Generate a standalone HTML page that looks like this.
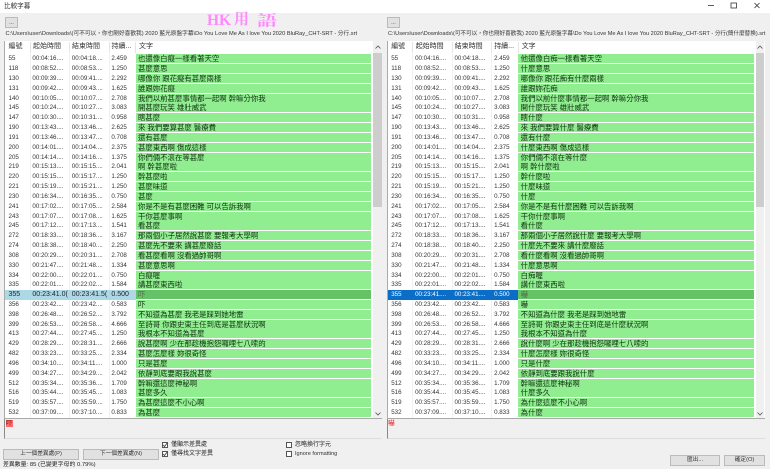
<!DOCTYPE html>
<html lang="zh-Hant"><head><meta charset="utf-8"><title>比較字幕</title>
<style>
html,body{margin:0;padding:0;width:770px;height:469px;overflow:hidden;background:#f0f0f0}
body{position:relative;font-family:"Liberation Sans","Noto Sans CJK TC",sans-serif;color:#222;filter:blur(.3px)}
.a{position:absolute;white-space:nowrap}
.tb{position:absolute;left:0;top:0;width:770px;height:13px;background:#fff}
.btn{position:absolute;background:#e1e1e1;border:1px solid #bbb;box-sizing:border-box;text-align:center;font-size:5.7px;color:#333;line-height:9px}
.p{position:absolute;top:41px;width:377.5px;height:378px;background:#fff;border-left:1px solid #aaa;border-bottom:1px solid #aaa;box-sizing:border-box;overflow:hidden}
.h{position:relative;height:13.3px;font-size:7px;line-height:12px;color:#333;background:#fff}
.h span{position:absolute;top:0}
.h i{position:absolute;top:1px;width:1px;height:11px;background:#e5e5e5}
.r{position:relative;height:9.83px;font-size:6.2px;line-height:9.4px;color:#333}
.r span{position:absolute;top:0}
.r .c1{left:3.5px}.r .c2{left:27.4px}.r .c3{left:66.8px}.r .c4{left:106.4px}
.r .c5{left:130.7px;width:235.6px;height:9px;background:#90ee90;color:#123012;font-size:7.4px;line-height:9.4px;padding-left:2.3px;box-sizing:border-box}
.r i{position:absolute;top:0;width:1px;height:9.83px;background:#f1f1f1}
.r i.x1{left:24.5px}.r i.x2{left:64px}.r i.x3{left:103.5px}
.s1{color:#223;font-size:7px}
.s1 .bg,.s2 .bg{position:absolute;left:0;top:0;width:130.7px;height:9.4px}
.s1 .bg{background:#add8e6}.s2 .bg{background:#0a6ec8}
.s2 .c1,.s2 .c2,.s2 .c3,.s2 .c4{color:#fff}
.sel .c5{background:#66c266;color:#4a6e4a}
.sb{position:absolute;top:41px;width:8.5px;height:377px;background:#f0f0f0}
.sb .t{position:absolute;left:0;top:12px;width:8.5px;height:154px;background:#cdcdcd}
.sb svg{position:absolute;left:1.5px;width:6px;height:4px}
.box{position:absolute;top:419px;height:19.5px;border-left:1px solid #8a8a8a;border-bottom:1px solid #ddd;box-sizing:border-box}
.cb{position:absolute;width:6px;height:6px;border:1px solid #555;background:#fff;box-sizing:border-box}
.cb svg{position:absolute;left:-1px;top:-1px;width:6px;height:6px}
.l{position:absolute;font-size:6px;line-height:8px;color:#222;white-space:nowrap}
.hk{position:absolute;font-family:'Liberation Serif','Noto Serif CJK SC',serif;font-weight:bold;color:#ff88ff;white-space:nowrap}
</style></head><body>
<div class="tb"></div>
<div class="a" style="left:4px;top:2px;font-size:6.6px;line-height:9px;color:#333">比較字幕</div>
<svg class="a" style="left:700px;top:0;width:70px;height:13px" viewBox="0 0 70 13"><path d="M8 5.5h6" stroke="#333" stroke-width=".8" fill="none"/><rect x="31" y="3" width="5.5" height="5" stroke="#333" stroke-width=".8" fill="none"/><path d="M54.5 3l5 5M59.5 3l-5 5" stroke="#333" stroke-width=".8" fill="none"/></svg>
<div class="hk" style="left:207px;top:10px;font-size:15.5px;line-height:22px">HK</div>
<div class="hk" style="left:234px;top:13px;font-size:15px;line-height:15px">用</div>
<div class="hk" style="left:257px;top:15px;font-size:20px;line-height:17px;transform:scaleY(.75);transform-origin:left top">語</div>
<div class="btn" style="left:5px;top:17px;width:13px;height:11px;line-height:10px">...</div>
<div class="btn" style="left:387px;top:17px;width:13px;height:11px;line-height:10px">...</div>
<div class="a" style="left:5.5px;top:30px;font-size:5.7px;line-height:9px;color:#333">C:\Users\user\Downloads\(可不可以，你也剛好喜歡我) 2020 藍光原盤字幕\Do You Love Me As I love You 2020 BluRay_CHT-SRT - 分行.srt</div>
<div class="a" style="left:388px;top:30px;font-size:5.6px;line-height:9px;color:#333">C:\Users\user\Downloads\(可不可以，你也剛好喜歡我) 2020 藍光原盤字幕\Do You Love Me As I love You 2020 BluRay_CHT-SRT - 分行(簡什麼替換).srt</div>

<div class="p" style="left:4px">
<div class="h"><span style="left:3.5px">編號</span><span style="left:28px">起始時間</span><span style="left:67px">結束時間</span><span style="left:106.5px">持續...</span><span style="left:134px">文字</span><i style="left:24.5px"></i><i style="left:64px"></i><i style="left:103.5px"></i><i style="left:130px"></i></div>
<div class="r"><i class="x1"></i><i class="x2"></i><i class="x3"></i><span class="c1">55</span><span class="c2">00:04:16....</span><span class="c3">00:04:18....</span><span class="c4">2.459</span><span class="c5">也還像白癡一樣看著天空</span></div>
<div class="r"><i class="x1"></i><i class="x2"></i><i class="x3"></i><span class="c1">118</span><span class="c2">00:08:52....</span><span class="c3">00:08:53....</span><span class="c4">1.250</span><span class="c5">甚麼意思</span></div>
<div class="r"><i class="x1"></i><i class="x2"></i><i class="x3"></i><span class="c1">130</span><span class="c2">00:09:39....</span><span class="c3">00:09:41....</span><span class="c4">2.292</span><span class="c5">哪像你 跟花癡有甚麼兩樣</span></div>
<div class="r"><i class="x1"></i><i class="x2"></i><i class="x3"></i><span class="c1">131</span><span class="c2">00:09:42....</span><span class="c3">00:09:43....</span><span class="c4">1.625</span><span class="c5">誰跟妳花癡</span></div>
<div class="r"><i class="x1"></i><i class="x2"></i><i class="x3"></i><span class="c1">140</span><span class="c2">00:10:05....</span><span class="c3">00:10:07....</span><span class="c4">2.708</span><span class="c5">我們以前甚麼事情都一起啊 幹嘛分你我</span></div>
<div class="r"><i class="x1"></i><i class="x2"></i><i class="x3"></i><span class="c1">145</span><span class="c2">00:10:24....</span><span class="c3">00:10:27....</span><span class="c4">3.083</span><span class="c5">開甚麼玩笑 雄壯威武</span></div>
<div class="r"><i class="x1"></i><i class="x2"></i><i class="x3"></i><span class="c1">147</span><span class="c2">00:10:30....</span><span class="c3">00:10:31....</span><span class="c4">0.958</span><span class="c5">瞎甚麼</span></div>
<div class="r"><i class="x1"></i><i class="x2"></i><i class="x3"></i><span class="c1">190</span><span class="c2">00:13:43....</span><span class="c3">00:13:46....</span><span class="c4">2.625</span><span class="c5">來 我們要算甚麼 醫療費</span></div>
<div class="r"><i class="x1"></i><i class="x2"></i><i class="x3"></i><span class="c1">191</span><span class="c2">00:13:46....</span><span class="c3">00:13:47....</span><span class="c4">0.708</span><span class="c5">還有甚麼</span></div>
<div class="r"><i class="x1"></i><i class="x2"></i><i class="x3"></i><span class="c1">200</span><span class="c2">00:14:01....</span><span class="c3">00:14:04....</span><span class="c4">2.375</span><span class="c5">甚麼東西啊 傷成這樣</span></div>
<div class="r"><i class="x1"></i><i class="x2"></i><i class="x3"></i><span class="c1">205</span><span class="c2">00:14:14....</span><span class="c3">00:14:16....</span><span class="c4">1.375</span><span class="c5">你們倆不滾在等甚麼</span></div>
<div class="r"><i class="x1"></i><i class="x2"></i><i class="x3"></i><span class="c1">219</span><span class="c2">00:15:13....</span><span class="c3">00:15:15....</span><span class="c4">2.041</span><span class="c5">啊 幹甚麼啦</span></div>
<div class="r"><i class="x1"></i><i class="x2"></i><i class="x3"></i><span class="c1">220</span><span class="c2">00:15:15....</span><span class="c3">00:15:17....</span><span class="c4">1.250</span><span class="c5">幹甚麼啦</span></div>
<div class="r"><i class="x1"></i><i class="x2"></i><i class="x3"></i><span class="c1">221</span><span class="c2">00:15:19....</span><span class="c3">00:15:21....</span><span class="c4">1.250</span><span class="c5">甚麼味道</span></div>
<div class="r"><i class="x1"></i><i class="x2"></i><i class="x3"></i><span class="c1">230</span><span class="c2">00:16:34....</span><span class="c3">00:16:35....</span><span class="c4">0.750</span><span class="c5">甚麼</span></div>
<div class="r"><i class="x1"></i><i class="x2"></i><i class="x3"></i><span class="c1">241</span><span class="c2">00:17:02....</span><span class="c3">00:17:05....</span><span class="c4">2.584</span><span class="c5">你是不是有甚麼困難 可以告訴我啊</span></div>
<div class="r"><i class="x1"></i><i class="x2"></i><i class="x3"></i><span class="c1">243</span><span class="c2">00:17:07....</span><span class="c3">00:17:08....</span><span class="c4">1.625</span><span class="c5">干你甚麼事啊</span></div>
<div class="r"><i class="x1"></i><i class="x2"></i><i class="x3"></i><span class="c1">245</span><span class="c2">00:17:12....</span><span class="c3">00:17:13....</span><span class="c4">1.541</span><span class="c5">看甚麼</span></div>
<div class="r"><i class="x1"></i><i class="x2"></i><i class="x3"></i><span class="c1">272</span><span class="c2">00:18:33....</span><span class="c3">00:18:36....</span><span class="c4">3.167</span><span class="c5">那兩個小子居然說甚麼 要報考大學啊</span></div>
<div class="r"><i class="x1"></i><i class="x2"></i><i class="x3"></i><span class="c1">274</span><span class="c2">00:18:38....</span><span class="c3">00:18:40....</span><span class="c4">2.250</span><span class="c5">甚麼先不要來 講甚麼廢話</span></div>
<div class="r"><i class="x1"></i><i class="x2"></i><i class="x3"></i><span class="c1">308</span><span class="c2">00:20:29....</span><span class="c3">00:20:31....</span><span class="c4">2.708</span><span class="c5">看甚麼看啊 沒看過帥哥啊</span></div>
<div class="r"><i class="x1"></i><i class="x2"></i><i class="x3"></i><span class="c1">330</span><span class="c2">00:21:47....</span><span class="c3">00:21:48....</span><span class="c4">1.334</span><span class="c5">甚麼意思啊</span></div>
<div class="r"><i class="x1"></i><i class="x2"></i><i class="x3"></i><span class="c1">334</span><span class="c2">00:22:00....</span><span class="c3">00:22:01....</span><span class="c4">0.750</span><span class="c5">白癡喔</span></div>
<div class="r"><i class="x1"></i><i class="x2"></i><i class="x3"></i><span class="c1">335</span><span class="c2">00:22:01....</span><span class="c3">00:22:02....</span><span class="c4">1.584</span><span class="c5">講甚麼東西啦</span></div>
<div class="r sel s1"><b class="bg"></b><span class="c1">355</span><span class="c2">00:23:41.0(</span><span class="c3">00:23:41.5(</span><span class="c4">0.500</span><span class="c5">吓</span></div>
<div class="r"><i class="x1"></i><i class="x2"></i><i class="x3"></i><span class="c1">356</span><span class="c2">00:23:42....</span><span class="c3">00:23:42....</span><span class="c4">0.583</span><span class="c5">吓</span></div>
<div class="r"><i class="x1"></i><i class="x2"></i><i class="x3"></i><span class="c1">398</span><span class="c2">00:26:48....</span><span class="c3">00:26:52....</span><span class="c4">3.792</span><span class="c5">不知道為甚麼 我老是踩到她地雷</span></div>
<div class="r"><i class="x1"></i><i class="x2"></i><i class="x3"></i><span class="c1">399</span><span class="c2">00:26:53....</span><span class="c3">00:26:58....</span><span class="c4">4.666</span><span class="c5">至詩哥 你跟史東主任到底是甚麼狀況啊</span></div>
<div class="r"><i class="x1"></i><i class="x2"></i><i class="x3"></i><span class="c1">413</span><span class="c2">00:27:44....</span><span class="c3">00:27:45....</span><span class="c4">1.250</span><span class="c5">我根本不知道為甚麼</span></div>
<div class="r"><i class="x1"></i><i class="x2"></i><i class="x3"></i><span class="c1">429</span><span class="c2">00:28:29....</span><span class="c3">00:28:31....</span><span class="c4">2.666</span><span class="c5">說甚麼啊 少在那趁機抱怨囉哩七八嗦的</span></div>
<div class="r"><i class="x1"></i><i class="x2"></i><i class="x3"></i><span class="c1">482</span><span class="c2">00:33:23....</span><span class="c3">00:33:25....</span><span class="c4">2.334</span><span class="c5">甚麼怎麼樣 妳很奇怪</span></div>
<div class="r"><i class="x1"></i><i class="x2"></i><i class="x3"></i><span class="c1">496</span><span class="c2">00:34:10....</span><span class="c3">00:34:11....</span><span class="c4">1.000</span><span class="c5">只是甚麼</span></div>
<div class="r"><i class="x1"></i><i class="x2"></i><i class="x3"></i><span class="c1">499</span><span class="c2">00:34:27....</span><span class="c3">00:34:29....</span><span class="c4">2.042</span><span class="c5">依靜到底要跟我說甚麼</span></div>
<div class="r"><i class="x1"></i><i class="x2"></i><i class="x3"></i><span class="c1">512</span><span class="c2">00:35:34....</span><span class="c3">00:35:36....</span><span class="c4">1.709</span><span class="c5">幹嘛還這麼神秘啊</span></div>
<div class="r"><i class="x1"></i><i class="x2"></i><i class="x3"></i><span class="c1">516</span><span class="c2">00:35:44....</span><span class="c3">00:35:45....</span><span class="c4">1.083</span><span class="c5">甚麼多久</span></div>
<div class="r"><i class="x1"></i><i class="x2"></i><i class="x3"></i><span class="c1">519</span><span class="c2">00:35:57....</span><span class="c3">00:35:59....</span><span class="c4">1.750</span><span class="c5">為甚麼這麼不小心啊</span></div>
<div class="r"><i class="x1"></i><i class="x2"></i><i class="x3"></i><span class="c1">532</span><span class="c2">00:37:09....</span><span class="c3">00:37:10....</span><span class="c4">0.833</span><span class="c5">為甚麼</span></div>
</div>
<div class="sb" style="left:373px"><div class="t"></div><svg style="top:4px" viewBox="0 0 6 4"><path d="M.5 3.5L3 1l2.5 2.5" stroke="#555" stroke-width=".8" fill="none"/></svg><svg style="top:371px" viewBox="0 0 6 4"><path d="M.5 .5L3 3l2.5-2.5" stroke="#555" stroke-width=".8" fill="none"/></svg></div>

<div class="p" style="left:386.7px;width:378px">
<div class="h"><span style="left:3.5px">編號</span><span style="left:28px">起始時間</span><span style="left:67px">結束時間</span><span style="left:106.5px">持續...</span><span style="left:134px">文字</span><i style="left:24.5px"></i><i style="left:64px"></i><i style="left:103.5px"></i><i style="left:130px"></i></div>
<div class="r"><i class="x1"></i><i class="x2"></i><i class="x3"></i><span class="c1">55</span><span class="c2">00:04:16....</span><span class="c3">00:04:18....</span><span class="c4">2.459</span><span class="c5">他還像白痴一樣看著天空</span></div>
<div class="r"><i class="x1"></i><i class="x2"></i><i class="x3"></i><span class="c1">118</span><span class="c2">00:08:52....</span><span class="c3">00:08:53....</span><span class="c4">1.250</span><span class="c5">什麼意思</span></div>
<div class="r"><i class="x1"></i><i class="x2"></i><i class="x3"></i><span class="c1">130</span><span class="c2">00:09:39....</span><span class="c3">00:09:41....</span><span class="c4">2.292</span><span class="c5">哪像你 跟花痴有什麼兩樣</span></div>
<div class="r"><i class="x1"></i><i class="x2"></i><i class="x3"></i><span class="c1">131</span><span class="c2">00:09:42....</span><span class="c3">00:09:43....</span><span class="c4">1.625</span><span class="c5">誰跟妳花痴</span></div>
<div class="r"><i class="x1"></i><i class="x2"></i><i class="x3"></i><span class="c1">140</span><span class="c2">00:10:05....</span><span class="c3">00:10:07....</span><span class="c4">2.708</span><span class="c5">我們以前什麼事情都一起啊 幹嘛分你我</span></div>
<div class="r"><i class="x1"></i><i class="x2"></i><i class="x3"></i><span class="c1">145</span><span class="c2">00:10:24....</span><span class="c3">00:10:27....</span><span class="c4">3.083</span><span class="c5">開什麼玩笑 雄壯威武</span></div>
<div class="r"><i class="x1"></i><i class="x2"></i><i class="x3"></i><span class="c1">147</span><span class="c2">00:10:30....</span><span class="c3">00:10:31....</span><span class="c4">0.958</span><span class="c5">瞎什麼</span></div>
<div class="r"><i class="x1"></i><i class="x2"></i><i class="x3"></i><span class="c1">190</span><span class="c2">00:13:43....</span><span class="c3">00:13:46....</span><span class="c4">2.625</span><span class="c5">來 我們要算什麼 醫療費</span></div>
<div class="r"><i class="x1"></i><i class="x2"></i><i class="x3"></i><span class="c1">191</span><span class="c2">00:13:46....</span><span class="c3">00:13:47....</span><span class="c4">0.708</span><span class="c5">還有什麼</span></div>
<div class="r"><i class="x1"></i><i class="x2"></i><i class="x3"></i><span class="c1">200</span><span class="c2">00:14:01....</span><span class="c3">00:14:04....</span><span class="c4">2.375</span><span class="c5">什麼東西啊 傷成這樣</span></div>
<div class="r"><i class="x1"></i><i class="x2"></i><i class="x3"></i><span class="c1">205</span><span class="c2">00:14:14....</span><span class="c3">00:14:16....</span><span class="c4">1.375</span><span class="c5">你們倆不滾在等什麼</span></div>
<div class="r"><i class="x1"></i><i class="x2"></i><i class="x3"></i><span class="c1">219</span><span class="c2">00:15:13....</span><span class="c3">00:15:15....</span><span class="c4">2.041</span><span class="c5">啊 幹什麼啦</span></div>
<div class="r"><i class="x1"></i><i class="x2"></i><i class="x3"></i><span class="c1">220</span><span class="c2">00:15:15....</span><span class="c3">00:15:17....</span><span class="c4">1.250</span><span class="c5">幹什麼啦</span></div>
<div class="r"><i class="x1"></i><i class="x2"></i><i class="x3"></i><span class="c1">221</span><span class="c2">00:15:19....</span><span class="c3">00:15:21....</span><span class="c4">1.250</span><span class="c5">什麼味道</span></div>
<div class="r"><i class="x1"></i><i class="x2"></i><i class="x3"></i><span class="c1">230</span><span class="c2">00:16:34....</span><span class="c3">00:16:35....</span><span class="c4">0.750</span><span class="c5">什麼</span></div>
<div class="r"><i class="x1"></i><i class="x2"></i><i class="x3"></i><span class="c1">241</span><span class="c2">00:17:02....</span><span class="c3">00:17:05....</span><span class="c4">2.584</span><span class="c5">你是不是有什麼困難 可以告訴我啊</span></div>
<div class="r"><i class="x1"></i><i class="x2"></i><i class="x3"></i><span class="c1">243</span><span class="c2">00:17:07....</span><span class="c3">00:17:08....</span><span class="c4">1.625</span><span class="c5">干你什麼事啊</span></div>
<div class="r"><i class="x1"></i><i class="x2"></i><i class="x3"></i><span class="c1">245</span><span class="c2">00:17:12....</span><span class="c3">00:17:13....</span><span class="c4">1.541</span><span class="c5">看什麼</span></div>
<div class="r"><i class="x1"></i><i class="x2"></i><i class="x3"></i><span class="c1">272</span><span class="c2">00:18:33....</span><span class="c3">00:18:36....</span><span class="c4">3.167</span><span class="c5">那兩個小子居然說什麼 要報考大學啊</span></div>
<div class="r"><i class="x1"></i><i class="x2"></i><i class="x3"></i><span class="c1">274</span><span class="c2">00:18:38....</span><span class="c3">00:18:40....</span><span class="c4">2.250</span><span class="c5">什麼先不要來 講什麼廢話</span></div>
<div class="r"><i class="x1"></i><i class="x2"></i><i class="x3"></i><span class="c1">308</span><span class="c2">00:20:29....</span><span class="c3">00:20:31....</span><span class="c4">2.708</span><span class="c5">看什麼看啊 沒看過帥哥啊</span></div>
<div class="r"><i class="x1"></i><i class="x2"></i><i class="x3"></i><span class="c1">330</span><span class="c2">00:21:47....</span><span class="c3">00:21:48....</span><span class="c4">1.334</span><span class="c5">什麼意思啊</span></div>
<div class="r"><i class="x1"></i><i class="x2"></i><i class="x3"></i><span class="c1">334</span><span class="c2">00:22:00....</span><span class="c3">00:22:01....</span><span class="c4">0.750</span><span class="c5">白痴喔</span></div>
<div class="r"><i class="x1"></i><i class="x2"></i><i class="x3"></i><span class="c1">335</span><span class="c2">00:22:01....</span><span class="c3">00:22:02....</span><span class="c4">1.584</span><span class="c5">講什麼東西啦</span></div>
<div class="r sel s2"><b class="bg"></b><span class="c1">355</span><span class="c2">00:23:41....</span><span class="c3">00:23:41....</span><span class="c4">0.500</span><span class="c5">嚇</span></div>
<div class="r"><i class="x1"></i><i class="x2"></i><i class="x3"></i><span class="c1">356</span><span class="c2">00:23:42....</span><span class="c3">00:23:42....</span><span class="c4">0.583</span><span class="c5">嚇</span></div>
<div class="r"><i class="x1"></i><i class="x2"></i><i class="x3"></i><span class="c1">398</span><span class="c2">00:26:48....</span><span class="c3">00:26:52....</span><span class="c4">3.792</span><span class="c5">不知道為什麼 我老是踩到她地雷</span></div>
<div class="r"><i class="x1"></i><i class="x2"></i><i class="x3"></i><span class="c1">399</span><span class="c2">00:26:53....</span><span class="c3">00:26:58....</span><span class="c4">4.666</span><span class="c5">至詩哥 你跟史東主任到底是什麼狀況啊</span></div>
<div class="r"><i class="x1"></i><i class="x2"></i><i class="x3"></i><span class="c1">413</span><span class="c2">00:27:44....</span><span class="c3">00:27:45....</span><span class="c4">1.250</span><span class="c5">我根本不知道為什麼</span></div>
<div class="r"><i class="x1"></i><i class="x2"></i><i class="x3"></i><span class="c1">429</span><span class="c2">00:28:29....</span><span class="c3">00:28:31....</span><span class="c4">2.666</span><span class="c5">說什麼啊 少在那趁機抱怨囉哩七八嗦的</span></div>
<div class="r"><i class="x1"></i><i class="x2"></i><i class="x3"></i><span class="c1">482</span><span class="c2">00:33:23....</span><span class="c3">00:33:25....</span><span class="c4">2.334</span><span class="c5">什麼怎麼樣 妳很奇怪</span></div>
<div class="r"><i class="x1"></i><i class="x2"></i><i class="x3"></i><span class="c1">496</span><span class="c2">00:34:10....</span><span class="c3">00:34:11....</span><span class="c4">1.000</span><span class="c5">只是什麼</span></div>
<div class="r"><i class="x1"></i><i class="x2"></i><i class="x3"></i><span class="c1">499</span><span class="c2">00:34:27....</span><span class="c3">00:34:29....</span><span class="c4">2.042</span><span class="c5">依靜到底要跟我說什麼</span></div>
<div class="r"><i class="x1"></i><i class="x2"></i><i class="x3"></i><span class="c1">512</span><span class="c2">00:35:34....</span><span class="c3">00:35:36....</span><span class="c4">1.709</span><span class="c5">幹嘛還這麼神秘啊</span></div>
<div class="r"><i class="x1"></i><i class="x2"></i><i class="x3"></i><span class="c1">516</span><span class="c2">00:35:44....</span><span class="c3">00:35:45....</span><span class="c4">1.083</span><span class="c5">什麼多久</span></div>
<div class="r"><i class="x1"></i><i class="x2"></i><i class="x3"></i><span class="c1">519</span><span class="c2">00:35:57....</span><span class="c3">00:35:59....</span><span class="c4">1.750</span><span class="c5">為什麼這麼不小心啊</span></div>
<div class="r"><i class="x1"></i><i class="x2"></i><i class="x3"></i><span class="c1">532</span><span class="c2">00:37:09....</span><span class="c3">00:37:10....</span><span class="c4">0.833</span><span class="c5">為什麼</span></div>
</div>
<div class="sb" style="left:755.5px"><div class="t"></div><svg style="top:4px" viewBox="0 0 6 4"><path d="M.5 3.5L3 1l2.5 2.5" stroke="#555" stroke-width=".8" fill="none"/></svg><svg style="top:371px" viewBox="0 0 6 4"><path d="M.5 .5L3 3l2.5-2.5" stroke="#555" stroke-width=".8" fill="none"/></svg></div>

<div class="box" style="left:4px;width:377.5px"><span class="a" style="left:.5px;top:1px;font-size:6.4px;line-height:7px;background:#ff6b6b;color:#7a2222;padding:0 .5px">吓</span></div>
<div class="box" style="left:386.7px;width:378px"><span class="a" style="left:.5px;top:1px;font-size:6.4px;line-height:7px;color:#e01010">嚇</span></div>

<div class="btn" style="left:3px;top:449px;width:76px;height:11px">上一個差異處(P)</div>
<div class="btn" style="left:83px;top:449px;width:76px;height:11px">下一個差異處(N)</div>
<div class="cb" style="left:162px;top:442px"><svg viewBox="0 0 6 6"><path d="M1 3l1.5 1.5L5 1.2" stroke="#333" stroke-width=".8" fill="none"/></svg></div>
<div class="l" style="left:171px;top:441px">僅顯示差異處</div>
<div class="cb" style="left:162px;top:451px"><svg viewBox="0 0 6 6"><path d="M1 3l1.5 1.5L5 1.2" stroke="#333" stroke-width=".8" fill="none"/></svg></div>
<div class="l" style="left:171px;top:450px">僅尋找文字差異</div>
<div class="cb" style="left:286px;top:442px"></div>
<div class="l" style="left:295px;top:441px">忽略換行字元</div>
<div class="cb" style="left:286px;top:451px"></div>
<div class="l" style="left:295px;top:450px;color:#333;font-size:5.6px">Ignore formatting</div>
<div class="l" style="left:3px;top:461px;font-size:5.9px">差異數量: 85 (已變更字母的 0.79%)</div>
<div class="btn" style="left:670px;top:455px;width:50px;height:11px">匯出...</div>
<div class="btn" style="left:724px;top:455px;width:41px;height:11px">確定(O)</div>
</body></html>
